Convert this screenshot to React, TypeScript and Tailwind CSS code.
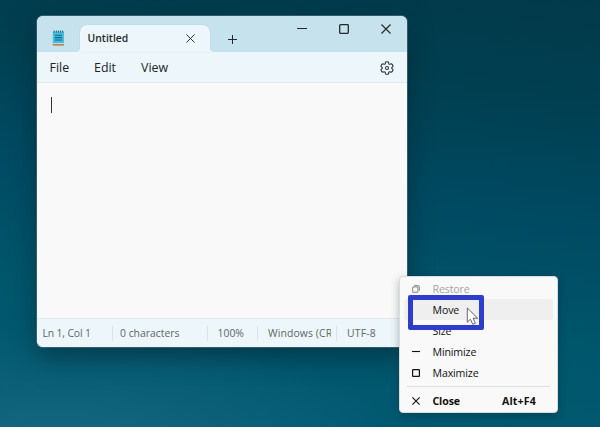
import React from "react";

function NotepadIcon() {
  return (
    <svg width="13" height="17" viewBox="0 0 13 17" className="shrink-0">
      <rect x="0.8" y="13" width="11.2" height="2.6" rx="0.6" fill="#b9672f" />
      <rect x="0.8" y="12.8" width="11.2" height="1.4" fill="#e8e4df" />
      <rect x="0.8" y="1.6" width="11.2" height="11.6" rx="0.8" fill="#45bfdf" />
      <path d="M2.2 .6v2M4.4 .6v2M6.5 .6v2M8.6 .6v2M10.7 .6v2" stroke="#24657a" strokeWidth="1" />
      <path d="M2.8 5.2h7.4M2.8 7.6h7.4M2.8 10h7.4" stroke="#0f6384" strokeWidth="1.1" />
    </svg>
  );
}

function Cross({ size, weight = 1.05 }: { size: number; weight?: number }) {
  return (
    <svg width={size} height={size} viewBox="0 0 10 10" fill="none" stroke="currentColor">
      <path d="M.5 .5l9 9M9.5 .5l-9 9" strokeWidth={weight} />
    </svg>
  );
}

function Gear() {
  return (
    <svg width="14" height="14" viewBox="0 0 14 14" fill="none" stroke="#30373a" strokeWidth="1.1" strokeLinejoin="round">
      <path d="M5.55 1.1Q7 .3 8.45 1.1L8.8 2.8Q9.2 3.25 9.8 3.3L11.4 2.75Q12.9 3.8 13.1 5.35L11.85 6.5Q11.65 7 11.85 7.5L13.1 8.65Q12.8 10.3 11.4 11.25L9.8 10.7Q9.2 10.75 8.8 11.2L8.45 12.9Q7 13.7 5.55 12.9L5.2 11.2Q4.8 10.75 4.2 10.7L2.6 11.25Q1.2 10.3 .9 8.65L2.15 7.5Q2.35 7 2.15 6.5L.9 5.35Q1.2 3.7 2.6 2.75L4.2 3.3Q4.8 3.25 5.2 2.8Z" />
      <circle cx="7" cy="7" r="1.55" />
    </svg>
  );
}

function TitleBar() {
  return (
    <header className="flex h-9 shrink-0 bg-[#c5e2ed] text-[#24282a]">
      <div className="flex w-[43px] items-center justify-center pt-2">
        <NotepadIcon />
      </div>
      <div className="relative mt-[9px] flex w-[130px] items-center justify-between rounded-t-[7px] bg-[#edf6fa] pr-[15px] pb-px pl-[7.5px] shadow-[0_0_1px_rgba(80,120,140,0.35)]">
        <svg className="absolute bottom-0 -left-1" width="4" height="4" viewBox="0 0 4 4">
          <path d="M4 0v4H0Q4 4 4 0" fill="#edf6fa" />
        </svg>
        <svg className="absolute -right-1 bottom-0" width="4" height="4" viewBox="0 0 4 4">
          <path d="M0 0v4h4Q0 4 0 0" fill="#edf6fa" />
        </svg>
        <span className="pt-px text-[10.4px] leading-none font-semibold">Untitled</span>
        <Cross size={9} />
      </div>
      <div className="flex w-[44px] items-center justify-center pt-[10px]">
        <svg width="9" height="9" viewBox="0 0 9 9" stroke="currentColor">
          <path d="M4.5 0v9M0 4.5h9" strokeWidth="1" />
        </svg>
      </div>
      <div className="ml-auto flex h-[26px] items-center">
        <div className="flex w-[42px] justify-center">
          <svg width="10" height="10" viewBox="0 0 10 10" stroke="currentColor"><path d="M0 4.5h10" /></svg>
        </div>
        <div className="flex w-[42px] justify-center">
          <svg width="10" height="10" viewBox="0 0 10 10" fill="none" stroke="currentColor"><rect x=".7" y=".7" width="8.6" height="8.6" rx=".8" strokeWidth="1.3" /></svg>
        </div>
        <div className="flex w-[42px] justify-center"><Cross size={10} weight={1.15} /></div>
      </div>
    </header>
  );
}

function Notepad() {
  return (
    <section className="absolute top-4 left-[37px] flex h-[331px] w-[370px] flex-col overflow-hidden rounded-[6px] bg-[#f9f9f9] shadow-[0_0_0_1px_rgba(85,120,130,0.55),0_10px_24px_rgba(0,30,42,0.5)]">
      <TitleBar />
      <nav className="flex h-[31px] shrink-0 items-center border-b border-[#dfe9ed] bg-[#edf6fa] pr-[13px] pl-[12.5px] text-[12.4px] leading-none text-[#202426]">
        <span className="w-[44.5px] pt-[3px]">File</span>
        <span className="w-[47px] pt-[3px]">Edit</span>
        <span className="pt-[3px]">View</span>
        <span className="ml-auto pt-px"><Gear /></span>
      </nav>
      <main className="flex-1 px-[14px] pt-[14px]">
        <div className="h-4 w-px bg-[#333]" />
      </main>
      <footer className="flex h-[29px] shrink-0 items-center border-t border-[#dfe9ec] bg-[#edf6fa] text-[10.4px] leading-none whitespace-nowrap text-[#5e666a]">
        <div className="w-[75px] pl-[5.5px] tracking-[-0.15px]">Ln 1, Col 1</div>
        <div className="flex h-[15px] w-[95px] items-center border-l border-[#dce4e8] pl-[7px]">0 characters</div>
        <div className="flex h-[15px] w-[50px] items-center border-l border-[#dce4e8] pl-[9.5px]">100%</div>
        <div className="flex h-[15px] w-[79px] items-center border-l border-[#dce4e8] pl-[10px]">
          <span className="w-[63px] overflow-hidden py-1 tracking-[0.12px]">Windows (CRLF)</span>
        </div>
        <div className="flex h-[15px] items-center border-l border-[#dce4e8] pl-[10px] tracking-[0.2px]">UTF-8</div>
      </footer>
    </section>
  );
}

function Item({ label, icon, className = "" }: { label: string; icon?: React.ReactNode; className?: string }) {
  return (
    <div className={"flex h-[21.2px] items-center rounded-[3px] " + className}>
      <span className="flex w-[28.5px] shrink-0 items-center pl-[8px]">{icon}</span>
      <span className="pt-[1.5px]">{label}</span>
    </div>
  );
}

function SystemMenu() {
  return (
    <aside className="absolute top-[276px] left-[399px] flex h-[137px] w-[159px] flex-col rounded-[4px] border border-[#d8dcde] bg-[#f9f9f9] px-1 pt-[1px] text-[10.6px] leading-none tracking-[-0.13px] text-[#111] shadow-[0_3px_8px_rgba(0,25,35,0.3)]">
      <Item
        label="Restore"
        className="text-[#a5a5a5]"
        icon={
          <svg width="8" height="8" viewBox="0 0 8 8" fill="none" stroke="#999" strokeWidth="1.2">
            <rect x=".6" y="1.9" width="5.3" height="5.5" rx="1" />
            <path d="M2 .6h3.8Q7.4 .6 7.4 2.2v3.6" />
          </svg>
        }
      />
      <Item label="Move" className="bg-[#efefef]" />
      <Item label="Size" />
      <Item
        label="Minimize"
        icon={<svg width="8" height="8" viewBox="0 0 8 8" stroke="currentColor"><path d="M0 3.5h8" strokeWidth="1.1" /></svg>}
      />
      <Item
        label="Maximize"
        icon={<svg width="8" height="8" viewBox="0 0 8 8" fill="none" stroke="currentColor"><rect x=".6" y=".6" width="6.8" height="6.8" rx=".5" strokeWidth="1.2" /></svg>}
      />
      <hr className="mx-[3px] mt-[3px] border-[#e0e0e0]" />
      <div className="mt-1 flex h-[21px] items-center font-bold text-[#111]">
        <span className="w-[28.5px] shrink-0 pb-px pl-2"><Cross size={8} weight={1.4} /></span>
        <span>Close</span>
        <span className="mr-[17px] ml-auto tracking-[0.15px]">Alt+F4</span>
      </div>
    </aside>
  );
}

export default function App() {
  return (
    <div className="relative h-[427px] w-[600px] overflow-hidden bg-[radial-gradient(ellipse_340px_130px_at_10%_106%,rgba(26,106,130,0.85)_0%,rgba(20,104,128,0)_100%),linear-gradient(187deg,#023a4a_0%,#003f50_20%,#004a62_45%,#00566b_70%,#025b74_100%)] font-['Open_Sans','Noto_Sans',sans-serif]">
      <Notepad />
      <SystemMenu />
      <div className="absolute top-[295px] left-[408px] h-[35px] w-[76px] rounded-[2px] border-[5px] border-[#2e3dcc]" />
      <svg className="absolute top-[307px] left-[466px]" width="14" height="19" viewBox="0 0 14 19">
        <path d="M1.3 1v14.2l3.1-3 2.4 5.2 2.6-1.2-2.3-5h4.5Z" fill="#fff" stroke="#555" strokeWidth=".9" strokeLinejoin="round" />
      </svg>
    </div>
  );
}
